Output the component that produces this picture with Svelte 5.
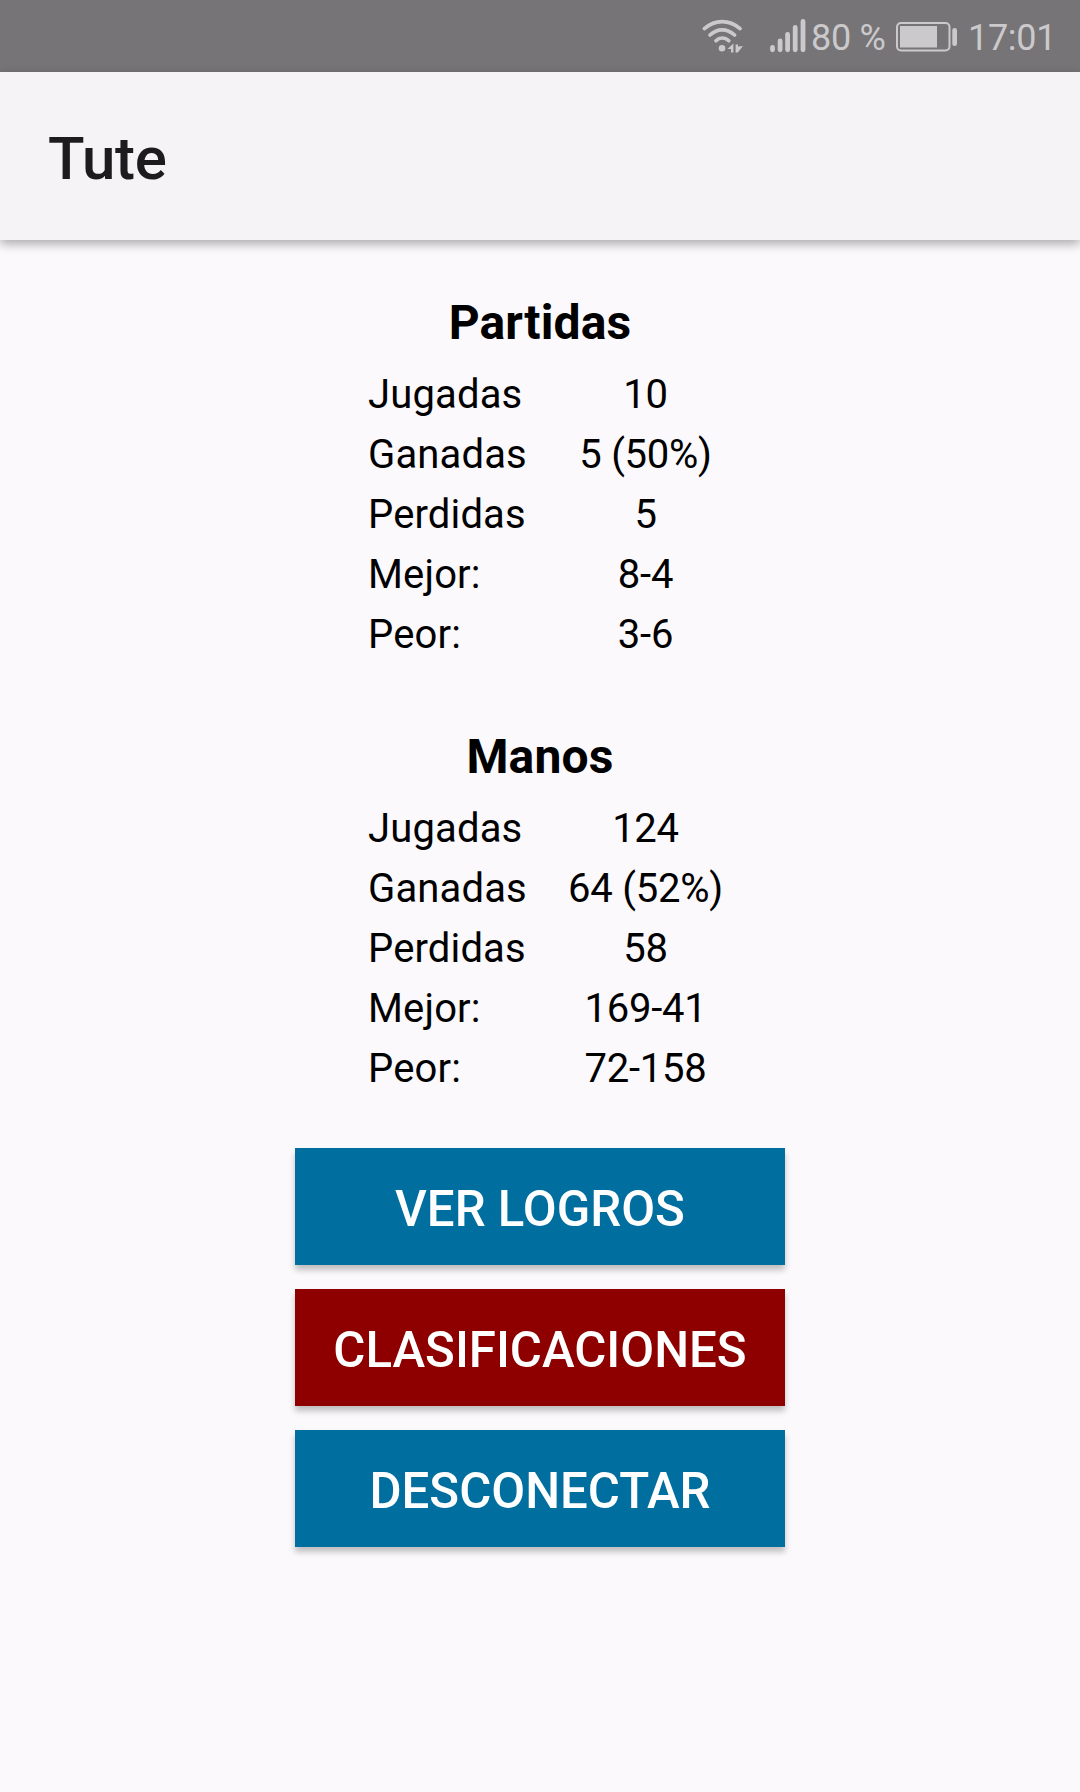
<!--
  Player statistics screen: status bar, app bar, two stat tables and the actions.
-->
<script lang="ts">
	type Stat = { label: string; value: string };

	const sections: Array<{ title: string; stats: Stat[] }> = [
		{
			title: 'Partidas',
			stats: [
				{ label: 'Jugadas', value: '10' },
				{ label: 'Ganadas', value: '5 (50%)' },
				{ label: 'Perdidas', value: '5' },
				{ label: 'Mejor:', value: '8-4' },
				{ label: 'Peor:', value: '3-6' }
			]
		},
		{
			title: 'Manos',
			stats: [
				{ label: 'Jugadas', value: '124' },
				{ label: 'Ganadas', value: '64 (52%)' },
				{ label: 'Perdidas', value: '58' },
				{ label: 'Mejor:', value: '169-41' },
				{ label: 'Peor:', value: '72-158' }
			]
		}
	];

	const actions = [
		{ label: 'VER LOGROS', danger: false },
		{ label: 'CLASIFICACIONES', danger: true },
		{ label: 'DESCONECTAR', danger: false }
	];
</script>

<div class="screen">
	<div class="status-bar">
		<svg class="wifi" width="42" height="34" viewBox="0 0 42 34" aria-hidden="true">
			<g fill="none" stroke="currentColor" stroke-width="3.7" stroke-linecap="round">
				<path d="M2.4 9.6Q10.5 2.6 20 2.6Q30 2.6 38 9.6" />
				<path d="M8 16Q13.5 10.8 20 10.8Q27 10.8 32.6 16" />
				<path d="M14 21.8Q16.8 19 20 19Q24 19 26.8 21.8" />
			</g>
			<circle cx="20" cy="29.2" r="3.3" fill="currentColor" />
			<path d="M25.4 30L31.4 24.6V33.4H29V30ZM33.6 25.6H36V27.4L41 27L35.8 33.4H33.6Z" fill="currentColor" />
		</svg>
		<svg class="signal" width="36" height="34" viewBox="0 0 36 34" aria-hidden="true">
			<g stroke="currentColor" stroke-width="4.8" stroke-linecap="round">
				<path d="M2.5 28.4V30.8" />
				<path d="M10.1 21.9V30.8" />
				<path d="M17.6 15.3V30.8" />
				<path d="M25.2 8.5V30.8" />
				<path d="M33 2.5V30.8" />
			</g>
		</svg>
		<span class="percent">80 %</span>
		<svg class="battery" width="62" height="30" viewBox="0 0 62 30" aria-hidden="true">
			<rect x="1" y="1" width="52.5" height="27.5" rx="4" fill="none" stroke="currentColor" stroke-width="2" />
			<rect x="4" y="4" width="37" height="21.5" fill="currentColor" />
			<rect x="56.3" y="6" width="4.7" height="18" rx="2.3" fill="currentColor" />
		</svg>
		<span class="clock">17:01</span>
	</div>

	<header class="app-bar">
		<h1>Tute</h1>
	</header>

	<main>
		{#each sections as section}
			<section>
				<h2>{section.title}</h2>
				<dl>
					{#each section.stats as stat}
						<dt>{stat.label}</dt>
						<dd>{stat.value}</dd>
					{/each}
				</dl>
			</section>
		{/each}

		<div class="actions">
			{#each actions as action}
				<button class:danger={action.danger}>{action.label}</button>
			{/each}
		</div>
	</main>
</div>

<style>
	:global(body) {
		margin: 0;
		background-color: #fbf9fc;
	}

	.screen {
		height: 1792px;
		overflow: hidden;
		background-color: #fbf9fc;
		color: #000;
		font-family: Roboto, sans-serif;
	}

	.status-bar {
		display: flex;
		align-items: center;
		box-sizing: border-box;
		height: 72px;
		padding: 0 0 0 702px;
		background-color: #767476;
		color: #cbc9cc;
		font-size: 36px;
		letter-spacing: -0.3px;
		line-height: 36px;
		white-space: nowrap;
	}

	.wifi,
	.signal,
	.battery {
		flex: none;
	}

	.signal {
		margin-left: 26px;
	}

	.percent {
		width: 74px;
		padding-top: 3px;
		margin-left: 5px;
	}

	.battery {
		margin: 2px 0 0 11px;
	}

	.clock {
		padding-top: 3px;
		margin-left: 10px;
	}

	.app-bar {
		position: relative;
		display: flex;
		align-items: center;
		box-sizing: border-box;
		height: 168px;
		padding: 5px 0 0 48px;
		background-color: #f5f3f6;
		box-shadow: 0 4px 10px rgba(0, 0, 0, 0.32);
	}

	h1 {
		margin: 0;
		color: #1d1b1e;
		font-size: 60px;
		font-weight: 500;
		letter-spacing: -0.2px;
		line-height: 72px;
	}

	main {
		display: flex;
		flex-direction: column;
		align-items: center;
		padding-top: 47px;
	}

	section {
		width: 364px;
	}

	section + section {
		margin-top: 56px;
	}

	h2 {
		margin: 0 0 6px;
		font-size: 48px;
		font-weight: 700;
		letter-spacing: 0.15px;
		line-height: 72px;
		text-align: center;
	}

	dl {
		display: grid;
		grid-template-columns: 200px 155px;
		grid-auto-rows: 60px;
		margin: 0;
		padding-left: 10px;
		font-size: 40px;
		line-height: 60px;
	}

	dt {
		letter-spacing: 0.15px;
	}

	dd {
		margin: 0;
		letter-spacing: -0.25px;
		text-align: center;
		white-space: nowrap;
	}

	.actions {
		display: flex;
		flex-direction: column;
		gap: 24px;
		width: 490px;
		margin-top: 49px;
	}

	button {
		height: 117px;
		padding: 4px 0 0;
		border: 0;
		background-color: #006e9f;
		box-shadow: 0 5px 6px rgba(0, 0, 0, 0.24);
		color: #fff;
		font-family: inherit;
		font-size: 49.2px;
		font-weight: 500;
	}

	.danger {
		background-color: #8e0000;
	}
</style>
